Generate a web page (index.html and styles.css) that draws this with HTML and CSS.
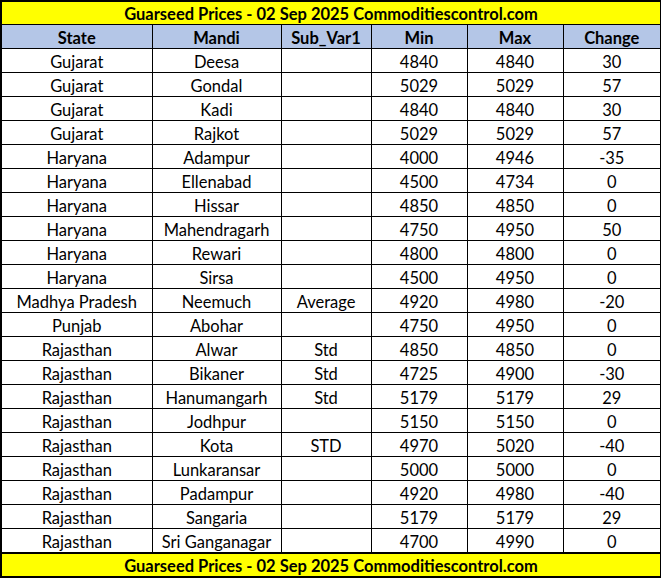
FILE: index.html
```html
<!DOCTYPE html>
<html>
<head>
<meta charset="utf-8">
<link rel="stylesheet" href="styles.css">
</head>
<body>
<table class="prices">
  <colgroup>
    <col class="c-state"><col class="c-mandi"><col class="c-sub"><col class="c-min"><col class="c-max"><col class="c-chg">
  </colgroup>
  <thead>
    <tr class="title"><td colspan="6">Guarseed Prices - 02 Sep 2025 Commoditiescontrol.com</td></tr>
    <tr class="head"><th>State</th><th>Mandi</th><th>Sub_Var1</th><th>Min</th><th>Max</th><th>Change</th></tr>
  </thead>
  <tbody>
    <tr><td>Gujarat</td><td>Deesa</td><td></td><td>4840</td><td>4840</td><td>30</td></tr>
    <tr><td>Gujarat</td><td>Gondal</td><td></td><td>5029</td><td>5029</td><td>57</td></tr>
    <tr><td>Gujarat</td><td>Kadi</td><td></td><td>4840</td><td>4840</td><td>30</td></tr>
    <tr><td>Gujarat</td><td>Rajkot</td><td></td><td>5029</td><td>5029</td><td>57</td></tr>
    <tr><td>Haryana</td><td>Adampur</td><td></td><td>4000</td><td>4946</td><td>-35</td></tr>
    <tr><td>Haryana</td><td>Ellenabad</td><td></td><td>4500</td><td>4734</td><td>0</td></tr>
    <tr><td>Haryana</td><td>Hissar</td><td></td><td>4850</td><td>4850</td><td>0</td></tr>
    <tr><td>Haryana</td><td>Mahendragarh</td><td></td><td>4750</td><td>4950</td><td>50</td></tr>
    <tr><td>Haryana</td><td>Rewari</td><td></td><td>4800</td><td>4800</td><td>0</td></tr>
    <tr><td>Haryana</td><td>Sirsa</td><td></td><td>4500</td><td>4950</td><td>0</td></tr>
    <tr><td>Madhya Pradesh</td><td>Neemuch</td><td>Average</td><td>4920</td><td>4980</td><td>-20</td></tr>
    <tr><td>Punjab</td><td>Abohar</td><td></td><td>4750</td><td>4950</td><td>0</td></tr>
    <tr><td>Rajasthan</td><td>Alwar</td><td>Std</td><td>4850</td><td>4850</td><td>0</td></tr>
    <tr><td>Rajasthan</td><td>Bikaner</td><td>Std</td><td>4725</td><td>4900</td><td>-30</td></tr>
    <tr><td>Rajasthan</td><td>Hanumangarh</td><td>Std</td><td>5179</td><td>5179</td><td>29</td></tr>
    <tr><td>Rajasthan</td><td>Jodhpur</td><td></td><td>5150</td><td>5150</td><td>0</td></tr>
    <tr><td>Rajasthan</td><td>Kota</td><td>STD</td><td>4970</td><td>5020</td><td>-40</td></tr>
    <tr><td>Rajasthan</td><td>Lunkaransar</td><td></td><td>5000</td><td>5000</td><td>0</td></tr>
    <tr><td>Rajasthan</td><td>Padampur</td><td></td><td>4920</td><td>4980</td><td>-40</td></tr>
    <tr><td>Rajasthan</td><td>Sangaria</td><td></td><td>5179</td><td>5179</td><td>29</td></tr>
    <tr><td>Rajasthan</td><td>Sri Ganganagar</td><td></td><td>4700</td><td>4990</td><td>0</td></tr>
  </tbody>
  <tfoot>
    <tr class="title"><td colspan="6">Guarseed Prices - 02 Sep 2025 Commoditiescontrol.com</td></tr>
  </tfoot>
</table>
</body>
</html>
```
FILE: styles.css
```css
html, body {
  margin: 0;
  padding: 0;
  background: #ffffff;
}
.prices {
  border-collapse: collapse;
  table-layout: fixed;
  width: 660px;
  font-family: Lato, "Liberation Sans", sans-serif;
  font-size: 16.5px;
  color: #000;
  border: 2px solid #000;
}
.c-state { width: 151px; }
.c-mandi { width: 129px; }
.c-sub { width: 90px; }
.c-min { width: 96px; }
.c-max { width: 96px; }
.c-chg { width: 98px; }
.prices td, .prices th {
  border: 1px solid #000;
  padding: 2px 0 0 0;
  height: 21px;
  text-align: center;
  vertical-align: middle;
  white-space: nowrap;
  line-height: 18px;
}
.prices th {
  font-weight: bold;
}
.head th {
  background: #b4c6e7;
}
.title td {
  background: #ffff00;
  font-weight: bold;
  height: 20px;
}
.prices thead .title td {
  border-bottom: 1px solid #000;
}
.prices tfoot .title td {
  border-top: 2px solid #000;
}
```
